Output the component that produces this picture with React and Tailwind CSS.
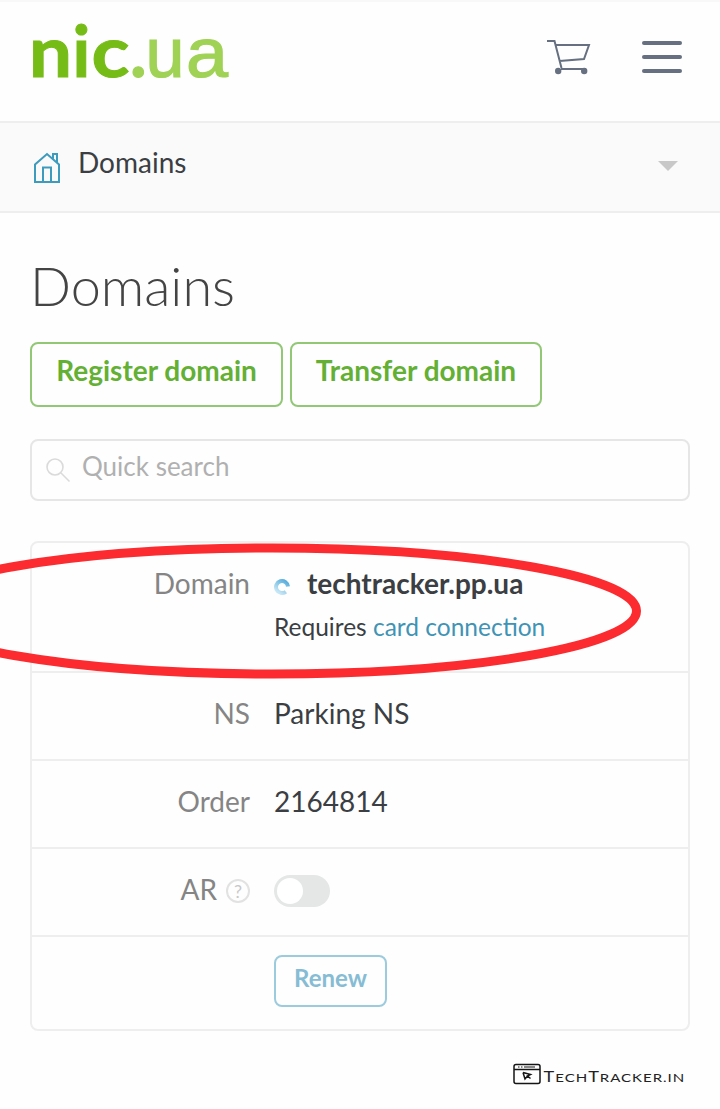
import React from "react";

function Logo() {
  return (
    <svg width="208" height="96" viewBox="-8 -19 208 96" className="-mt-[19px] -ml-2 block" role="img">
      <g fontFamily="Lato, sans-serif" fontWeight="700" fontSize="70" fill="#76bc17" stroke="#76bc17" strokeWidth="1">
        <text x="-3" y="52.500" textLength="43" lengthAdjust="spacingAndGlyphs">n</text>
        <text x="40.500" y="52.500">i</text>
        <text x="59.500" y="52.500" textLength="38" lengthAdjust="spacingAndGlyphs">c</text>
        <text x="98" y="52.500" fill="#9fd255" stroke="#9fd255">.</text>
      </g>
      <g fontFamily="'Liberation Sans', sans-serif" fontSize="70" fill="#9fd255" stroke="#9fd255" strokeWidth="1.200">
        <text x="113.500" y="52.500">u</text>
        <text x="154" y="52.500" textLength="42" lengthAdjust="spacingAndGlyphs">a</text>
      </g>
    </svg>
  );
}

function CartIcon() {
  return (
    <svg width="44" height="36" viewBox="0 0 44 36" fill="none" stroke="#667080" strokeWidth="2">
      <path d="M0 2h7.500l7 27M9 6h33l-5 14-24.500 2M14 30h25" />
      <circle cx="11.200" cy="32" r="3.200" fill="#667080" stroke="none" />
      <circle cx="37.200" cy="32" r="3.200" fill="#667080" stroke="none" />
    </svg>
  );
}

function HomeIcon() {
  return (
    <svg width="28" height="32" viewBox="0 0 28 32" fill="none" stroke="#3d9bbd" strokeWidth="2">
      <path d="M2 30V12.500L14 2l12 10.500V30zM10 30V15.500h8V30M20 6.500V2h4v8.500" />
    </svg>
  );
}

function Spinner() {
  return (
    <svg width="16" height="16" viewBox="0 0 16 16" fill="none" className="mt-[7px]">
      <defs>
        <linearGradient id="spin" x1="1" y1="0" x2="0.300" y2="1">
          <stop offset="0" stopColor="#4fa9da" />
          <stop offset="1" stopColor="#c5e6f5" />
        </linearGradient>
      </defs>
      <path d="M14 7.500A6 6 0 1 0 11.800 12.700" stroke="url(#spin)" strokeWidth="4" />
    </svg>
  );
}

function Row({ label, children, className }) {
  return (
    <div className={"flex border-b-2 border-[#eeeeee] " + className}>
      <div className="w-[218px] shrink-0 text-right text-[#858585]">{label}</div>
      <div className="pl-6">{children}</div>
    </div>
  );
}

export default function App() {
  return (
    <div className="relative h-[1109px] w-[720px] overflow-hidden bg-[#fefefe] font-['Lato',sans-serif] text-[28px] leading-[34px] text-[#3b3e43]">
      <header className="flex h-[123px] items-start justify-between border-t-2 border-b-2 border-t-[#f8f8f8] border-b-[#eeeeee] pt-[22px] pr-[38px] pl-8">
        <Logo />
        <div className="flex pt-[15px]">
          <CartIcon />
          <div className="ml-[51px] flex flex-col gap-[10px] pt-[2px]">
            <span className="h-1 w-10 rounded-full bg-[#667080]" />
            <span className="h-1 w-10 rounded-full bg-[#667080]" />
            <span className="h-1 w-10 rounded-full bg-[#667080]" />
          </div>
        </div>
      </header>

      <nav className="flex h-[90px] justify-between border-b-2 border-[#eeeeee] bg-[#fafafa] pr-[42px] pl-[33px]">
        <div className="flex">
          <div className="pt-[29px]"><HomeIcon /></div>
          <span className="pt-[22px] pl-[17px]">Domains</span>
        </div>
        <svg width="20" height="10" viewBox="0 0 20 10" className="mt-[38px]">
          <path d="M0 0h20L10 10z" fill="#c8c8c8" />
        </svg>
      </nav>

      <main className="px-[30px]">
        <h1 className="pt-[41px] text-[54px] leading-[64px] font-light text-[#444444]">Domains</h1>
        <div className="flex gap-[7px] pt-6 font-bold text-[#63b035]">
          <button className="flex h-[65px] w-[253px] justify-center rounded-lg border-2 border-[#91c775] pt-[9px]">Register domain</button>
          <button className="flex h-[65px] w-[252px] justify-center rounded-lg border-2 border-[#91c775] pt-[9px]">Transfer domain</button>
        </div>

        <div className="mt-8 flex h-[62px] rounded-lg border-2 border-[#e6e6e6] pl-[13px]">
          <svg width="26" height="26" viewBox="0 0 26 26" fill="none" stroke="#dadada" strokeWidth="1.600" className="mt-4">
            <circle cx="10" cy="10" r="8" />
            <path d="M16 16l8.500 8.500" />
          </svg>
          <span className="pt-2 pl-[11px] text-[26px] text-[#b0b0b0]">Quick search</span>
        </div>

        <section className="mt-[40px] rounded-lg border-2 border-[#eeeeee]">
          <Row label="Domain" className="h-[130px] pt-[23px]">
            <div className="flex items-center">
              <Spinner />
              <span className="pl-[17px] font-bold">techtracker.pp.ua</span>
            </div>
            <div className="pt-[10px] text-[24.500px]">
              Requires <a className="text-[#3f93b5]">card connection</a>
            </div>
          </Row>
          <Row label="NS" className="h-[88px] pt-[23px]">Parking NS</Row>
          <Row label="Order" className="h-[88px] pt-[23px]">2164814</Row>
          <Row
            className="h-[88px] pt-[23px]"
            label={
              <div className="flex justify-end gap-[9px]">
                AR
                <span className="mt-[7px] flex size-6 items-center justify-center rounded-full border-2 border-[#e2e2e2] text-[18px] leading-5 text-[#c8c8c8]">?</span>
              </div>
            }
          >
            <div className="mt-[3px] flex h-8 w-14 items-center rounded-full bg-[#e5e7e7] pl-[3px]">
              <span className="size-[26px] rounded-full bg-white" />
            </div>
          </Row>
          <div className="h-[92px] pt-[18px] pl-[242px]">
            <button className="flex h-[52px] w-[113px] justify-center rounded-lg border-2 border-[#9ccbdd] pt-1 text-[24px] font-bold text-[#86bcd4]">Renew</button>
          </div>
        </section>
      </main>

      <footer className="flex items-end justify-end pt-8 pr-[34px]">
        <svg width="28" height="22" viewBox="0 0 28 22" fill="none" stroke="#151515" strokeWidth="1.500" className="mr-[2px] mb-px">
          <rect x="1" y="1.500" width="26" height="19" rx="2" />
          <path d="M1 6.500h26" />
          <path d="M5 4h1.500M8 4h1.500M11 4h11" strokeWidth="1" />
          <path d="M10 9.500l7.500 2-3 1.500 3 2.500M10 9.500l2 6.500 2.500-3" />
        </svg>
        <svg width="143" height="22" viewBox="0 0 143 22" fill="#222222" fontFamily="Lato, sans-serif">
          <g transform="scale(1.250 1)">
            <text x="0.500" y="18" fontSize="14.500" textLength="112.500" lengthAdjust="spacing">T<tspan fontSize="12">ECH</tspan>T<tspan fontSize="12">RACKER.IN</tspan></text>
          </g>
        </svg>
      </footer>

      <svg width="720" height="160" viewBox="0 530 720 160" className="pointer-events-none absolute top-[530px] left-0">
        <ellipse cx="272" cy="611" rx="364.500" ry="63" fill="none" stroke="#fb2b2f" strokeWidth="9" />
      </svg>
    </div>
  );
}
